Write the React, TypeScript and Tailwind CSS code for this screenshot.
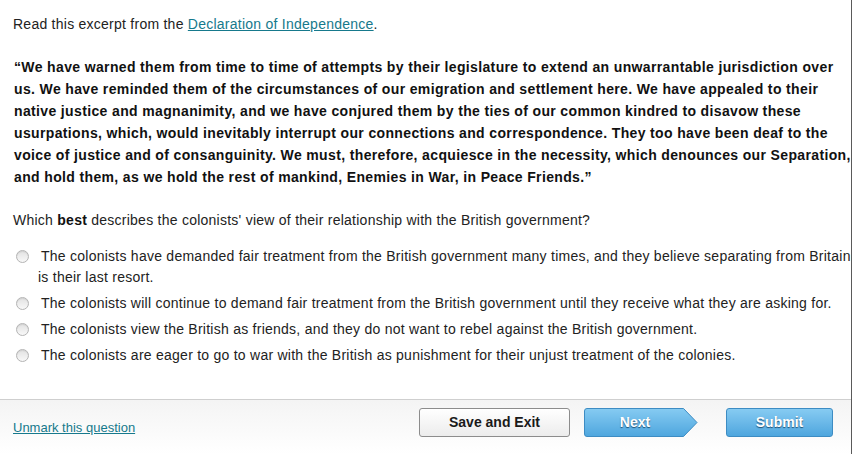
import React from "react";

const options = [
  ["The colonists have demanded fair treatment from the British government many times, and they believe separating from Britain", "is their last resort."],
  ["The colonists will continue to demand fair treatment from the British government until they receive what they are asking for."],
  ["The colonists view the British as friends, and they do not want to rebel against the British government."],
  ["The colonists are eager to go to war with the British as punishment for their unjust treatment of the colonies."],
];

const excerpt = [
  "“We have warned them from time to time of attempts by their legislature to extend an unwarrantable jurisdiction over",
  "us. We have reminded them of the circumstances of our emigration and settlement here. We have appealed to their",
  "native justice and magnanimity, and we have conjured them by the ties of our common kindred to disavow these",
  "usurpations, which, would inevitably interrupt our connections and correspondence. They too have been deaf to the",
  "voice of justice and of consanguinity. We must, therefore, acquiesce in the necessity, which denounces our Separation,",
  "and hold them, as we hold the rest of mankind, Enemies in War, in Peace Friends.”",
];

const Radio = () => (
  <span className="absolute left-[3px] top-[4px] w-[13px] h-[13px] rounded-full border border-[#b4b4b4] bg-gradient-to-b from-[#e2e2e2] to-[#f8f8f8] shadow-[inset_0_1px_1px_rgba(0,0,0,0.08)]" />
);

const NextButton = () => (
  <button className="relative w-[114px] h-[29px] text-white font-bold text-[14px] [text-shadow:0_1px_1px_#1d4f73]">
    <svg className="absolute inset-0" width="114" height="29" viewBox="0 0 114 29">
      <defs>
        <linearGradient id="nextg" x1="0" y1="0" x2="0" y2="1">
          <stop offset="0" stopColor="#86cbf2" />
          <stop offset="1" stopColor="#4ea6de" />
        </linearGradient>
      </defs>
      <path
        d="M3 0.5 H99.5 L113 14.5 L99.5 28.5 H3 Q0.5 28.5 0.5 26 V3 Q0.5 0.5 3 0.5 Z"
        fill="url(#nextg)"
        stroke="#3d8cc3"
      />
    </svg>
    <span className="relative pr-[12px]">Next</span>
  </button>
);

export default function App() {
  return (
    <div className="w-[854px] h-[454px] bg-white flex font-['Liberation_Sans',Arial,sans-serif] overflow-hidden">
      <div className="w-[852px] h-full border-r border-[#5a5a5a] flex flex-col">
        <main className="flex-1 pl-[13px] tracking-[0.25px]">
          <p className="mt-[14px] text-[14px] leading-[20px] text-[#222]">
            Read this excerpt from the{" "}
            <a href="#" className="text-[#16798c] underline">
              Declaration of Independence
            </a>
            .
          </p>
          <p className="mt-[22px] pl-[1px] text-[14px] leading-[22px] font-bold text-[#111] tracking-[0.36px] whitespace-nowrap">
            {excerpt.map((l, i) => (
              <React.Fragment key={i}>
                {l}
                {i < excerpt.length - 1 && <br />}
              </React.Fragment>
            ))}
          </p>
          <p className="mt-[22px] text-[14px] leading-[20px] text-[#222]">
            Which <b className="text-[#111]">best</b> describes the colonists' view of their relationship with the
            British government?
          </p>
          <div className="mt-[16px] flex flex-col gap-[5px]">
            {options.map((o, i) => (
              <div key={i} className="relative pl-[25px] text-[14px] leading-[21px] text-[#222] whitespace-nowrap">
                <Radio />
                <span className="pl-[3px]">{o[0]}</span>
                {o[1] && (
                  <>
                    <br />
                    {o[1]}
                  </>
                )}
              </div>
            ))}
          </div>
        </main>
        <footer className="h-[55px] border-t border-[#cfcfcf] bg-gradient-to-b from-[#f4f4f4] to-white flex items-start pt-[8px] pl-[13px] pr-[18px]">
          <a href="#" className="text-[13px] text-[#16798c] underline mt-[10px]">
            Unmark this question
          </a>
          <div className="ml-auto flex items-center">
            <button className="w-[151px] h-[29px] rounded-[3px] border border-[#8c8c8c] bg-gradient-to-b from-white to-[#ececec] text-[14px] font-bold text-[#1a1a1a]">
              Save and Exit
            </button>
            <div className="ml-[14px]">
              <NextButton />
            </div>
            <button className="ml-[28px] w-[107px] h-[29px] rounded-[3px] border border-[#3d8cc3] bg-gradient-to-b from-[#86cbf2] to-[#4ea6de] text-[14px] font-bold text-white [text-shadow:0_1px_1px_#1d4f73]">
              Submit
            </button>
          </div>
        </footer>
      </div>
    </div>
  );
}
